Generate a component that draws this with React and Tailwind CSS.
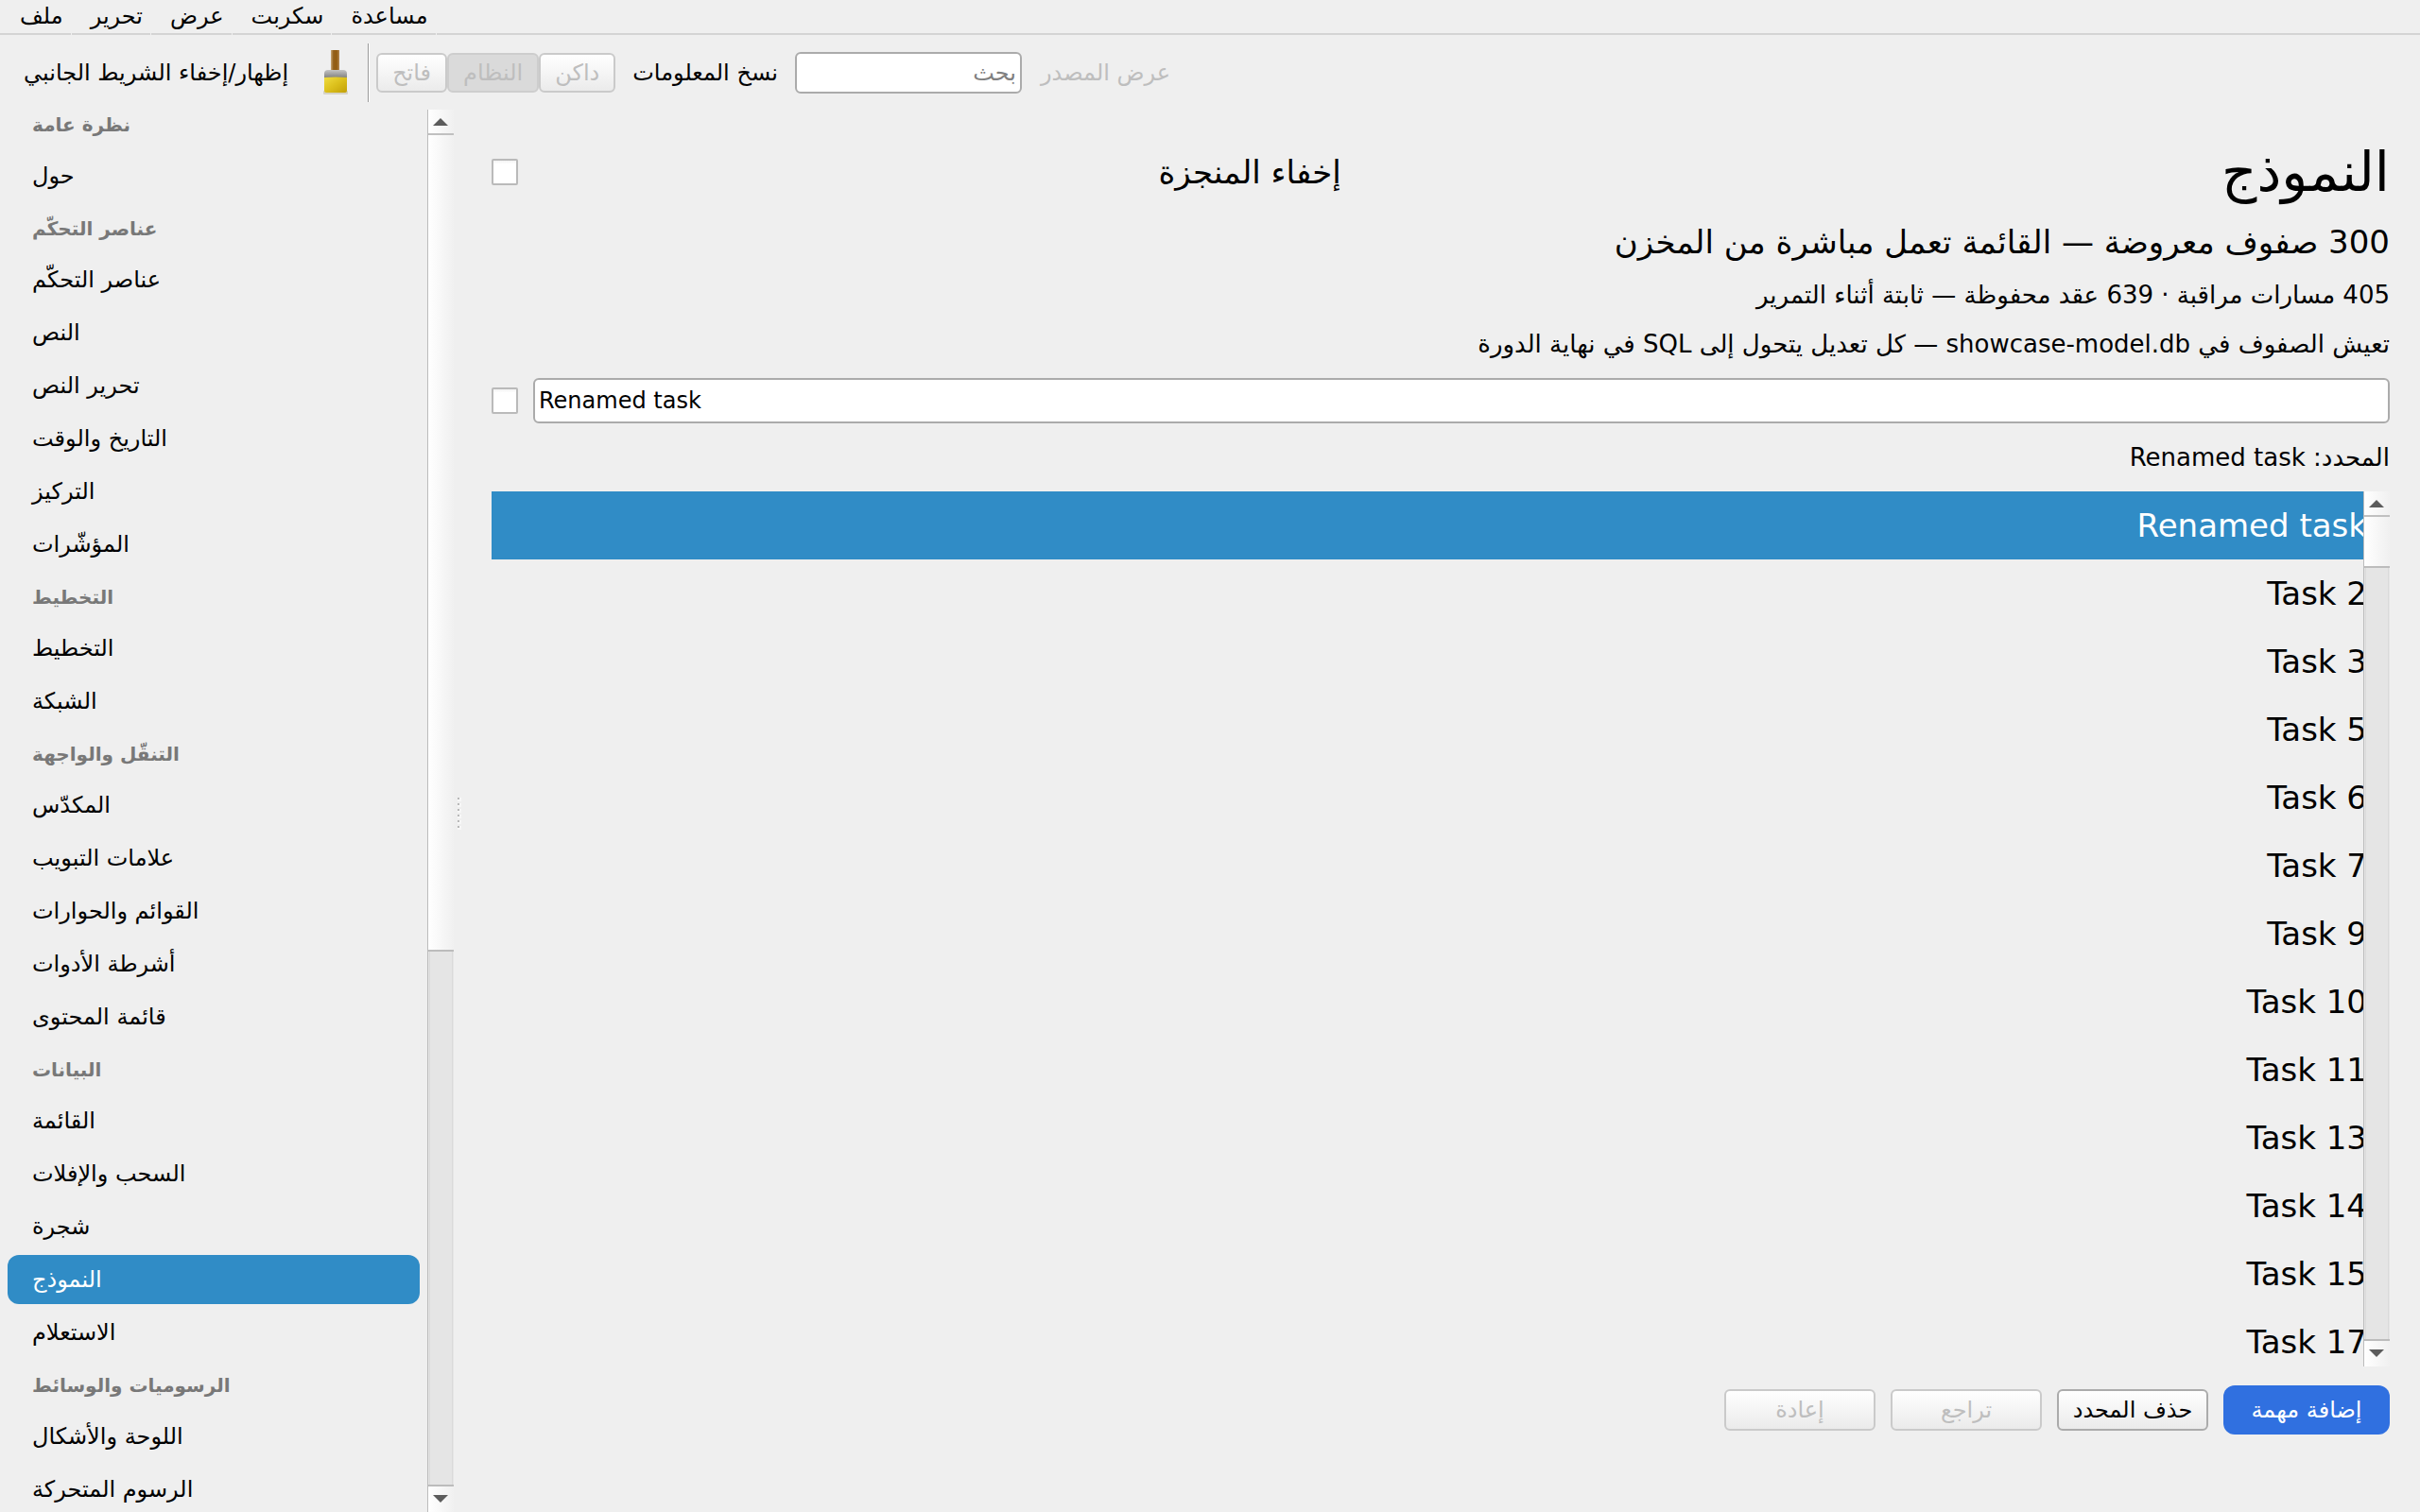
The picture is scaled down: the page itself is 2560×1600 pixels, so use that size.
import { useState } from "react"
import clsx from "clsx"

const menus = ["ملف", "تحرير", "عرض", "سكربت", "مساعدة"]

const themes = ["فاتح", "النظام", "داكن"]

const sections = [
  { title: "نظرة عامة", items: ["حول"] },
  {
    title: "عناصر التحكّم",
    items: ["عناصر التحكّم", "النص", "تحرير النص", "التاريخ والوقت", "التركيز", "المؤشّرات"],
  },
  { title: "التخطيط", items: ["التخطيط", "الشبكة"] },
  {
    title: "التنقّل والواجهة",
    items: ["المكدّس", "علامات التبويب", "القوائم والحوارات", "أشرطة الأدوات", "قائمة المحتوى"],
  },
  { title: "البيانات", items: ["القائمة", "السحب والإفلات", "شجرة", "النموذج", "الاستعلام"] },
  { title: "الرسوميات والوسائط", items: ["اللوحة والأشكال", "الرسوم المتحركة"] },
]

const initialTasks = [
  "Renamed task",
  "Task 2",
  "Task 3",
  "Task 5",
  "Task 6",
  "Task 7",
  "Task 9",
  "Task 10",
  "Task 11",
  "Task 13",
  "Task 14",
  "Task 15",
  "Task 17",
]

function BrushIcon() {
  return (
    <svg width="28" height="48" viewBox="0 0 28 48" aria-hidden="true">
      <defs>
        <linearGradient id="handle" x1="0" x2="1" y1="0" y2="0">
          <stop offset="0" stopColor="#c9a877" />
          <stop offset="0.3" stopColor="#93601a" />
          <stop offset="0.7" stopColor="#935c10" />
          <stop offset="1" stopColor="#b38954" />
        </linearGradient>
        <linearGradient id="ferrule" x1="0" x2="0" y1="0" y2="1">
          <stop offset="0" stopColor="#c4c4c4" />
          <stop offset="1" stopColor="#7b7b7b" />
        </linearGradient>
        <linearGradient id="bristle" x1="0" x2="1" y1="0" y2="1">
          <stop offset="0" stopColor="#f0dc40" />
          <stop offset="0.5" stopColor="#dcc01c" />
          <stop offset="1" stopColor="#c2a008" />
        </linearGradient>
      </defs>
      <rect x="1" y="43" width="26" height="4" rx="1" fill="#d6d3c6" />
      <rect x="9" y="0" width="9" height="22" fill="url(#handle)" />
      <path d="M2 30v-5q0-4 4-4h16q4 0 4 4v5z" fill="url(#ferrule)" />
      <path d="M2 29q12-1 24 0v14q0 2-2 2H4q-2 0-2-2z" fill="url(#bristle)" />
    </svg>
  )
}

function Arrow({ down }) {
  return (
    <svg width="16" height="8" viewBox="0 0 16 8" aria-hidden="true">
      <path d={down ? "M0 0h16L8 8z" : "M0 8h16L8 0z"} fill="#5c5c5c" />
    </svg>
  )
}

function ScrollBar({ thumbClass }) {
  return (
    <div className="flex h-full w-7 flex-col border-l border-[#bcbcbc] bg-[#e5e5e5]" aria-hidden="true">
      <div className="flex h-[27px] shrink-0 items-center justify-center border-b-2 border-[#c0c0c0] bg-linear-to-r from-white to-[#f0f0f0] pr-px">
        <Arrow />
      </div>
      <div className={clsx("shrink-0 border-b-2 border-[#bcbcbc] bg-linear-to-r from-white to-[#f0f0f0]", thumbClass)} />
      <div className="mx-px flex-1 border-x border-[#dadada]" />
      <div className="flex h-[29px] shrink-0 items-center justify-center border-t-2 border-[#bcbcbc] bg-linear-to-r from-white to-[#f0f0f0] pr-px pb-px">
        <Arrow down />
      </div>
    </div>
  )
}

function CheckBox({ id, ...props }) {
  return (
    <input
      id={id}
      type="checkbox"
      className="size-7 shrink-0 appearance-none rounded-xs border-2 border-[#bababa] bg-white bg-linear-to-b from-[#f3f3f3] to-white to-15% checked:bg-[#308cc6]"
      {...props}
    />
  )
}

function PushButton({ children, disabled }) {
  return (
    <button
      type="button"
      disabled={disabled}
      className="h-11 w-40 rounded-md border-2 border-[#ababab] bg-linear-to-b from-white to-[#ebebeb] disabled:border-[#cacaca] disabled:text-[#bebebe]"
    >
      {children}
    </button>
  )
}

function MenuBar() {
  return (
    <nav className="flex h-[37px] shrink-0">
      {menus.map((menu) => (
        <button
          key={menu}
          type="button"
          className="mr-px border-b-2 border-[#d4d4d4] pr-2 pb-[2px] pl-5 leading-8 first:pl-[21px]"
        >
          {menu}
        </button>
      ))}
      <div className="flex-1 border-b-2 border-[#d4d4d4]" />
    </nav>
  )
}

function ToolBar() {
  const [query, setQuery] = useState("")

  return (
    <header className="flex h-[79px] shrink-0 items-center pl-[25px]">
      <button type="button">إظهار/إخفاء الشريط الجانبي</button>
      <button type="button" className="mr-5 ml-9" aria-label="فرشاة">
        <BrushIcon />
      </button>
      <div className="mr-[7px] h-[62px] w-[2px] border-l border-[#9a9a9a] bg-white" />
      <div className="flex">
        {themes.map((theme) => (
          <button
            key={theme}
            type="button"
            disabled
            className={clsx(
              "h-[42px] rounded-md border-2 px-[15px] text-[#bebebe]",
              theme === "النظام"
                ? "border-[#cdcdcd] bg-[#dadada]"
                : "border-[#cacaca] bg-linear-to-b from-white to-[#ebebeb]",
            )}
          >
            {theme}
          </button>
        ))}
      </div>
      <button type="button" className="ml-[18px]">
        نسخ المعلومات
      </button>
      <input
        type="text"
        dir="rtl"
        aria-label="بحث"
        placeholder="بحث"
        value={query}
        onChange={(e) => setQuery(e.target.value)}
        className="ml-[18px] h-11 w-60 rounded-md border-2 border-[#ababab] bg-white px-1 placeholder:text-[#808080]"
      />
      <button type="button" disabled className="ml-5 text-[#bebebe]">
        عرض المصدر
      </button>
    </header>
  )
}

function Sidebar({ page, onSelect }) {
  return (
    <aside className="flex w-[480px] shrink-0 overflow-hidden">
      <nav className="min-w-0 flex-1 overflow-hidden pr-2 pl-2">
        {sections.map((section, i) => (
          <section key={section.title}>
            <h2
              className={clsx(
                "mb-1 flex items-end pb-[10px] pl-[26px] text-[20px] leading-7 font-bold text-[#787878]",
                i === 0 ? "h-10" : "h-[50px]",
              )}
            >
              {section.title}
            </h2>
            {section.items.map((item) => (
              <button
                key={item}
                type="button"
                onClick={() => onSelect(item)}
                className={clsx(
                  "mb-1 block h-[52px] w-full rounded-xl pl-[26px] text-left",
                  item === page && "bg-[#308cc6] text-white",
                )}
              >
                {item}
              </button>
            ))}
          </section>
        ))}
      </nav>
      <ScrollBar thumbClass="h-[864px]" />
    </aside>
  )
}

function Splitter() {
  return (
    <div className="flex w-10 shrink-0 flex-col justify-center gap-1 pt-1 pl-1">
      {[0, 1, 2, 3, 4, 5].map((dot) => (
        <span key={dot} className="size-[2px] bg-[#b8b8b8] shadow-[1px_1px_0_1px_#f7f7f7]" />
      ))}
    </div>
  )
}

function ModelPage() {
  const [tasks, setTasks] = useState(initialTasks)
  const [selected, setSelected] = useState(0)

  const rename = (name) => {
    setTasks((prev) => prev.map((task, i) => (i === selected ? name : task)))
  }

  return (
    <main className="flex min-w-0 flex-1 flex-col pt-8 pr-8 pb-[82px]" dir="rtl">
      <div className="flex h-[68px] items-center justify-between">
        <h1 className="text-[58px] leading-[68px]">النموذج</h1>
        <div className="flex w-[45%] items-center justify-between ps-[5px]">
          <label htmlFor="hide-done" className="text-[34px] leading-10">
            إخفاء المنجزة
          </label>
          <CheckBox id="hide-done" />
        </div>
      </div>
      <p className="mt-[18px] text-[34px] leading-[44px]">300 صفوف معروضة — القائمة تعمل مباشرة من المخزن</p>
      <p className="mt-4 text-[26px] leading-9">405 مسارات مراقبة · 639 عقد محفوظة — ثابتة أثناء التمرير</p>
      <p className="mt-4 text-[26px] leading-9">
        تعيش الصفوف في showcase-model.db — كل تعديل يتحول إلى SQL في نهاية الدورة
      </p>
      <div className="mt-[18px] flex items-center gap-4">
        <input
          type="text"
          dir="ltr"
          aria-label="اسم المهمة"
          value={tasks[selected]}
          onChange={(e) => rename(e.target.value)}
          className="h-12 min-w-0 flex-1 rounded-md border-2 border-[#ababab] bg-white px-1"
        />
        <CheckBox aria-label="منجزة" />
      </div>
      <p className="mt-[18px] mb-[18px] text-[26px] leading-9">المحدد: {tasks[selected]}</p>
      <div className="relative min-h-0 flex-1 overflow-hidden" dir="ltr">
        <ul>
          {tasks.map((task, i) => (
            <li key={i}>
              <button
                type="button"
                onClick={() => setSelected(i)}
                className={clsx(
                  "block h-[72px] w-full pr-6 text-right text-[34px]",
                  i === selected && "bg-[#308cc6] text-white",
                )}
              >
                {task}
              </button>
            </li>
          ))}
        </ul>
        <div className="absolute inset-y-0 right-0">
          <ScrollBar thumbClass="h-[54px]" />
        </div>
      </div>
      <div className="mt-5 flex items-center gap-4">
        <button type="button" className="h-[52px] w-44 rounded-xl bg-[#3070e0] text-white">
          إضافة مهمة
        </button>
        <PushButton>حذف المحدد</PushButton>
        <PushButton disabled>تراجع</PushButton>
        <PushButton disabled>إعادة</PushButton>
      </div>
    </main>
  )
}

export default function App() {
  const [page, setPage] = useState("النموذج")

  return (
    <div className="flex h-screen flex-col overflow-hidden bg-[#efefef] font-['DejaVu_Sans',sans-serif] text-[24px] leading-8 text-black">
      <MenuBar />
      <ToolBar />
      <div className="flex min-h-0 flex-1">
        <Sidebar page={page} onSelect={setPage} />
        <Splitter />
        <ModelPage />
      </div>
    </div>
  )
}
